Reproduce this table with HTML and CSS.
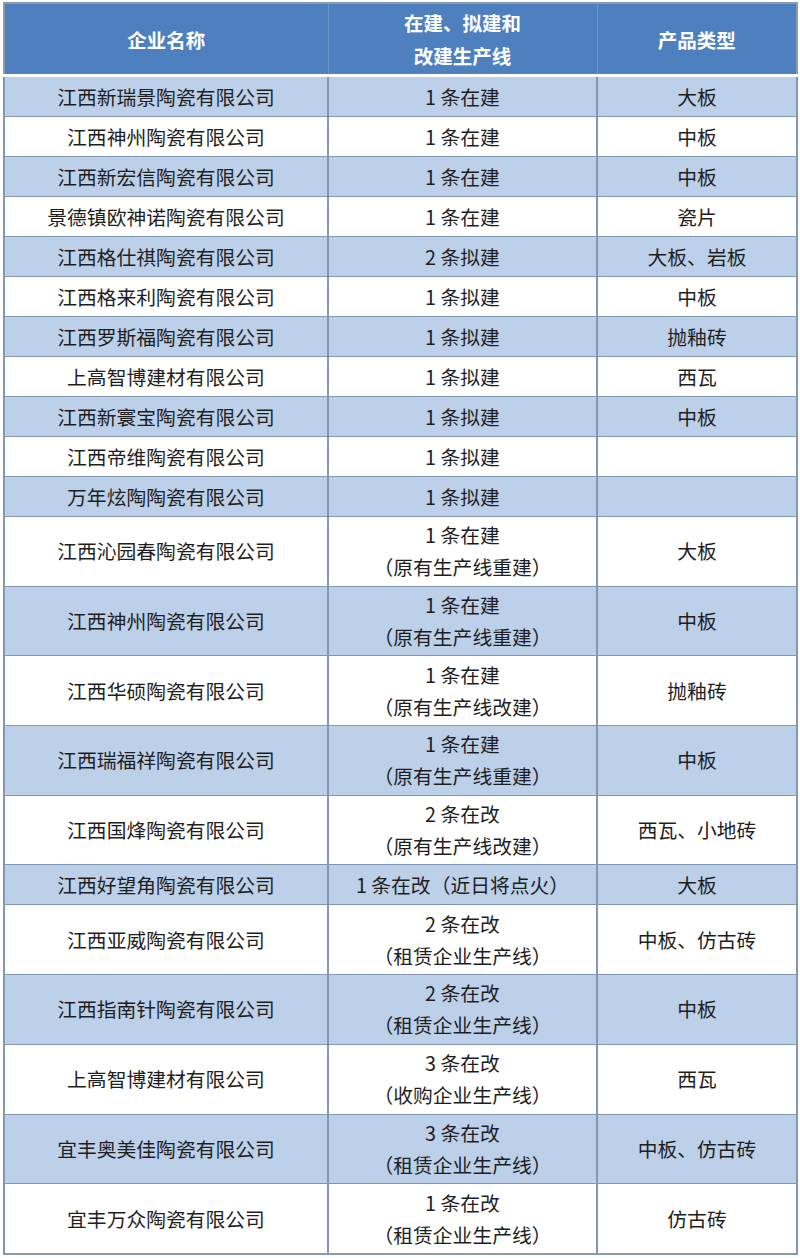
FILE: index.html
```html
<!DOCTYPE html>
<html lang="zh-CN">
<head>
<meta charset="utf-8">
<title>企业生产线</title>
<link rel="stylesheet" href="styles.css">
</head>
<body>
<div class="wrap">
<table class="grid">
<colgroup><col class="c1"><col class="c2"><col class="c3"></colgroup>
<thead>
<tr><th>企业名称</th><th>在建、拟建和<br>改建生产线</th><th>产品类型</th></tr>
</thead>
<tbody>
<tr class="b"><td>江西新瑞景陶瓷有限公司</td><td>1 条在建</td><td>大板</td></tr>
<tr><td>江西神州陶瓷有限公司</td><td>1 条在建</td><td>中板</td></tr>
<tr class="b"><td>江西新宏信陶瓷有限公司</td><td>1 条在建</td><td>中板</td></tr>
<tr><td>景德镇欧神诺陶瓷有限公司</td><td>1 条在建</td><td>瓷片</td></tr>
<tr class="b"><td>江西格仕祺陶瓷有限公司</td><td>2 条拟建</td><td>大板、岩板</td></tr>
<tr><td>江西格来利陶瓷有限公司</td><td>1 条拟建</td><td>中板</td></tr>
<tr class="b"><td>江西罗斯福陶瓷有限公司</td><td>1 条拟建</td><td>抛釉砖</td></tr>
<tr><td>上高智博建材有限公司</td><td>1 条拟建</td><td>西瓦</td></tr>
<tr class="b"><td>江西新寰宝陶瓷有限公司</td><td>1 条拟建</td><td>中板</td></tr>
<tr><td>江西帝维陶瓷有限公司</td><td>1 条拟建</td><td></td></tr>
<tr class="b"><td>万年炫陶陶瓷有限公司</td><td>1 条拟建</td><td></td></tr>
<tr class="d"><td>江西沁园春陶瓷有限公司</td><td>1 条在建<br>（原有生产线重建）</td><td>大板</td></tr>
<tr class="d b"><td>江西神州陶瓷有限公司</td><td>1 条在建<br>（原有生产线重建）</td><td>中板</td></tr>
<tr class="d"><td>江西华硕陶瓷有限公司</td><td>1 条在建<br>（原有生产线改建）</td><td>抛釉砖</td></tr>
<tr class="d b"><td>江西瑞福祥陶瓷有限公司</td><td>1 条在建<br>（原有生产线重建）</td><td>中板</td></tr>
<tr class="d"><td>江西国烽陶瓷有限公司</td><td>2 条在改<br>（原有生产线改建）</td><td>西瓦、小地砖</td></tr>
<tr class="b"><td>江西好望角陶瓷有限公司</td><td>1 条在改（近日将点火）</td><td>大板</td></tr>
<tr class="d"><td>江西亚威陶瓷有限公司</td><td>2 条在改<br>（租赁企业生产线）</td><td>中板、仿古砖</td></tr>
<tr class="d b"><td>江西指南针陶瓷有限公司</td><td>2 条在改<br>（租赁企业生产线）</td><td>中板</td></tr>
<tr class="d"><td>上高智博建材有限公司</td><td>3 条在改<br>（收购企业生产线）</td><td>西瓦</td></tr>
<tr class="d b"><td>宜丰奥美佳陶瓷有限公司</td><td>3 条在改<br>（租赁企业生产线）</td><td>中板、仿古砖</td></tr>
<tr class="d"><td>宜丰万众陶瓷有限公司</td><td>1 条在改<br>（租赁企业生产线）</td><td>仿古砖</td></tr>
</tbody>
</table>
</div>
</body>
</html>
```

FILE: styles.css
```css
html, body {
  margin: 0;
  padding: 0;
  background: #ffffff;
}
.wrap {
  padding: 2px 0 0 3px;
}
.grid {
  width: 793px;
  border-collapse: collapse;
  table-layout: fixed;
  font-family: "Noto Sans CJK SC", "Noto Sans", sans-serif;
  color: #1e1e1e;
  border: 2px solid #8b9bab;
}
.c1 { width: 324px; }
.c2 { width: 269px; }
.c3 { width: 200px; }
.grid th {
  background: #4e80bf;
  color: #ffffff;
  font-weight: bold;
  font-size: 19.5px;
  line-height: 33px;
  height: 70px;
  padding: 0;
  border-left: 1px solid #6b95c9;
  border-right: 1px solid #6b95c9;
  border-bottom: 3px solid #ffffff;
  text-align: center;
  vertical-align: middle;
}
.grid td {
  height: 39px;
  padding: 0;
  font-size: 19.8px;
  line-height: 32px;
  text-align: center;
  vertical-align: middle;
  border: 2px solid #8197b3;
  border-top-width: 1px;
  border-bottom-width: 1px;
  white-space: nowrap;
}
.grid tr.b td {
  background: #bcd0ea;
}
.grid tr.d td {
  height: 68.7px;
}
```
